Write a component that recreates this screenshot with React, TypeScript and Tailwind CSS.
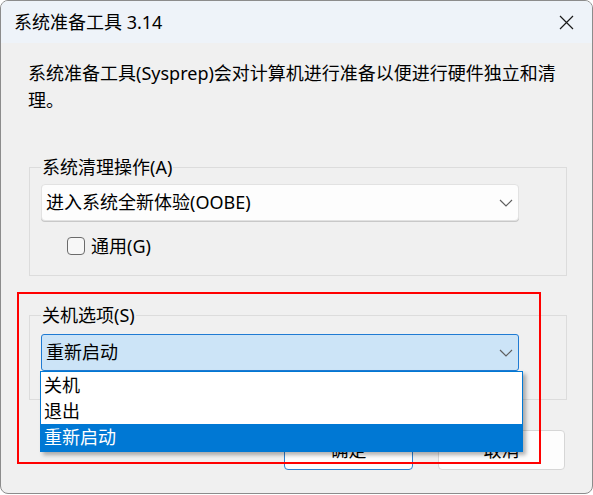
import React from 'react';

const Chevron: React.FC = () => (
    <svg width="14" height="8" viewBox="0 0 14 8" fill="none">
        <path d="M1 1l6 6 6-6" stroke="#5f5f5f" strokeWidth="1.2" />
    </svg>
);

const options = ['关机', '退出', '重新启动'];

const App: React.FC = () => {
    return (
        <div className="w-[593px] h-[495px] bg-white font-['Noto_Sans','Noto_Sans_CJK_SC',sans-serif] text-[#000]">
            <div className="relative w-[593px] h-[494px] border border-[#8c8c8c] rounded-[8px] overflow-hidden bg-[#f0f0f0]">
                {/* 标题栏 */}
                <div className="h-[42px] bg-[#eef3f9] flex items-center justify-between pl-[13px] pr-[18px]">
                    <span className="text-[18px] leading-[24px]">系统准备工具 3.14</span>
                    <svg width="15" height="15" viewBox="0 0 15 15" fill="none">
                        <path d="M1 1l13 13M14 1L1 14" stroke="#1a1a1a" strokeWidth="1.2" />
                    </svg>
                </div>

                <div className="pl-[27px] pr-[25px]">
                    <p className="w-[538px] pt-[17px] text-[18px] leading-[27px]">
                        系统准备工具(Sysprep)会对计算机进行准备以便进行硬件独立和清理。
                    </p>

                    {/* 系统清理操作 */}
                    <fieldset className="mt-[41px] ml-[1px] w-[538px] border border-[#dcdcdc] px-[11px] pb-[19px]">
                        <legend className="px-[1px] text-[18px] leading-[24px]">系统清理操作(A)</legend>
                        <div className="mt-[5px] h-[37px] w-[478px] bg-[#fdfdfd] border border-[#e2e2e2] rounded-[4px] flex items-center justify-between pl-[4px] pr-[5px] text-[18px] shadow-[0_1px_0_#c8c8c8]">
                            <span>进入系统全新体验(OOBE)</span>
                            <Chevron />
                        </div>
                        <label className="mt-[15px] ml-[26px] flex items-center gap-[6px] text-[18px] leading-[20px]">
                            <span className="w-[18px] h-[18px] border border-[#6b6b6b] rounded-[4px] bg-[#f7f7f7]" />
                            通用(G)
                        </label>
                    </fieldset>

                    {/* 关机选项 */}
                    <fieldset className="mt-[27px] ml-[1px] w-[538px] border border-[#dcdcdc] px-[11px] pb-[28px]">
                        <legend className="px-[1px] text-[18px] leading-[24px]">关机选项(S)</legend>
                        <div className="mt-[7px] h-[37px] w-[478px] bg-[#cce4f7] border border-[#1f7bd3] rounded-[3px] flex items-center justify-between pl-[4px] pr-[5px] text-[18px]">
                            <span>重新启动</span>
                            <Chevron />
                        </div>
                    </fieldset>

                    <div className="mt-[30px] mr-[2px] flex justify-end gap-[25px]">
                        <button className="h-[40px] w-[129px] rounded-[4px] bg-[#fdfdfd] border border-[#2b7fd1] text-[18px]">
                            确定
                        </button>
                        <button className="h-[40px] w-[127px] rounded-[4px] bg-[#fdfdfd] border border-[#d6d6d6] text-[18px]">
                            取消
                        </button>
                    </div>
                </div>

                {/* 展开的下拉列表 */}
                <div className="absolute left-[39px] top-[370px] w-[483px] border border-[#0078d4] bg-white shadow-[3px_3px_4px_rgba(0,0,0,0.3)]">
                    {options.map((o, i) => (
                        <div
                            key={o}
                            className={
                                i === 2
                                    ? 'h-[27px] pl-[3px] flex items-center text-[18px] bg-[#0078d4] text-white'
                                    : 'h-[26px] pl-[3px] flex items-center text-[18px]'
                            }>
                            {o}
                        </div>
                    ))}
                </div>

                {/* 红色标注框 */}
                <div className="absolute left-[16px] top-[291px] w-[524px] h-[172px] border-2 border-[#ff0000]" />
            </div>
        </div>
    );
};

export default App;
